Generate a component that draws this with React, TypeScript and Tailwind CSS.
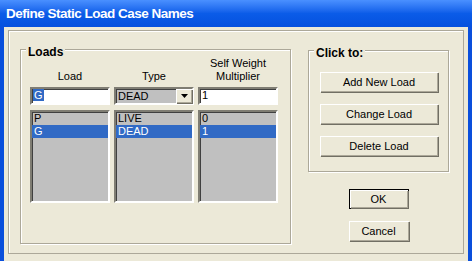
import React from 'react';

const face = 'bg-[#ECE9D8]';
const sunken = 'border-2 border-t-[#7f7d73] border-l-[#7f7d73] border-b-white border-r-white shadow-[inset_1px_1px_0_#404040]';
const raised = 'shadow-[inset_1px_1px_0_#fff,inset_-1px_-1px_0_#aca899,1px_1px_0_#716f64]';

const loads = [
    { name: 'P', type: 'LIVE', mult: '0' },
    { name: 'G', type: 'DEAD', mult: '1' },
];
const selected = 1;

const GroupBox: React.FC<{ label: string; className: string; children: React.ReactNode }> = ({ label, className, children }) => (
    <div className={`relative border border-[#aca899] shadow-[inset_1px_1px_0_#fff,1px_1px_0_#fff] ${className}`}>
        <span className={`absolute -top-[4px] left-[5px] px-[2px] ${face} text-[12px] font-bold leading-[13px]`}>{label}</span>
        {children}
    </div>
);

const Button: React.FC<{ label: string; isDefault?: boolean; className?: string }> = ({ label, isDefault, className }) => (
    <div
        className={`flex items-center justify-center h-[20px] ${face} text-[11px] leading-none ${isDefault ? 'border border-black' : ''} ${className ?? ''}`}
    >
        <div className={`flex items-center justify-center w-full h-full ${raised}`}>{label}</div>
    </div>
);

const Column: React.FC<{ header: React.ReactNode; field: React.ReactNode; items: string[] }> = ({ header, field, items }) => (
    <div className="flex flex-col w-[80px]">
        <div className="flex flex-col justify-end items-center h-[26px] text-[11px] leading-[13px] text-center">{header}</div>
        <div className="mt-[4px] h-[18px]">{field}</div>
        <div className={`mt-[5px] h-[93px] bg-[#c0c0c0] ${sunken}`}>
            {items.map((item, i) => (
                <div
                    key={i}
                    className={`h-[13px] pl-[2px] text-[11px] leading-[13px] ${i === selected ? 'bg-[#316ac5] text-white' : ''}`}
                >
                    {item}
                </div>
            ))}
        </div>
    </div>
);

export default function App() {
    return (
        <div
            className="w-[472px] h-[261px] flex flex-col overflow-hidden bg-[#0a4fdc] text-black"
            style={{ fontFamily: '"Liberation Sans", Arial, sans-serif' }}
        >
            {/* title bar */}
            <div className="h-[27px] shrink-0 pl-[6px] pt-[8px] bg-gradient-to-b from-[#4a90ff] via-[#0b5ce8] to-[#0550de]">
                <span className="text-white font-bold text-[13.5px] leading-[16px] tracking-[-0.5px] block -mt-[2px]">
                    Define Static Load Case Names
                </span>
            </div>

            {/* client area */}
            <div className={`flex-1 mx-[4px] pt-[3px] px-[4px] ${face}`}>
                <div className="h-[224px] border border-[#aca899] shadow-[inset_1px_1px_0_#fff] pl-[11px] pt-[18px]">
                    <div className="flex items-start gap-[17px]">
                        <GroupBox label="Loads" className="w-[271px] h-[195px] pl-[9px] pt-[7px]">
                            <div className="flex gap-[4px]">
                                <Column
                                    header="Load"
                                    field={
                                        <div className={`h-full bg-white ${sunken} pl-[1px] text-[11px] leading-[13px]`}>
                                            <span className="bg-[#316ac5] text-white px-[1px]">G</span>
                                        </div>
                                    }
                                    items={loads.map(l => l.name)}
                                />
                                <Column
                                    header="Type"
                                    field={
                                        <div className={`h-full bg-[#c0c0c0] ${sunken} flex items-center pl-[2px] text-[11px]`}>
                                            <span className="flex-1">DEAD</span>
                                            <div className={`w-[16px] h-full ${face} ${raised} flex items-center justify-center`}>
                                                <svg width="7" height="4" viewBox="0 0 7 4">
                                                    <path d="M0 0h7L3.5 4z" fill="#000" />
                                                </svg>
                                            </div>
                                        </div>
                                    }
                                    items={loads.map(l => l.type)}
                                />
                                <Column
                                    header={<><span>Self Weight</span><span>Multiplier</span></>}
                                    field={
                                        <div className={`h-full bg-white ${sunken} pl-[2px] text-[11px] leading-[13px]`}>1</div>
                                    }
                                    items={loads.map(l => l.mult)}
                                />
                            </div>
                        </GroupBox>

                        <div className="w-[141px] flex flex-col items-center">
                            <GroupBox label="Click to:" className="w-[141px] h-[122px] mt-[1px] pl-[11px] pt-[21px] flex flex-col gap-[12px]">
                                <Button label="Add New Load" className="w-[118px]" />
                                <Button label="Change Load" className="w-[118px]" />
                                <Button label="Delete Load" className="w-[118px]" />
                            </GroupBox>
                            <Button label="OK" isDefault className="w-[60px] mt-[17px]" />
                            <Button label="Cancel" className="w-[60px] mt-[12px]" />
                        </div>
                    </div>
                </div>
            </div>
        </div>
    );
}
